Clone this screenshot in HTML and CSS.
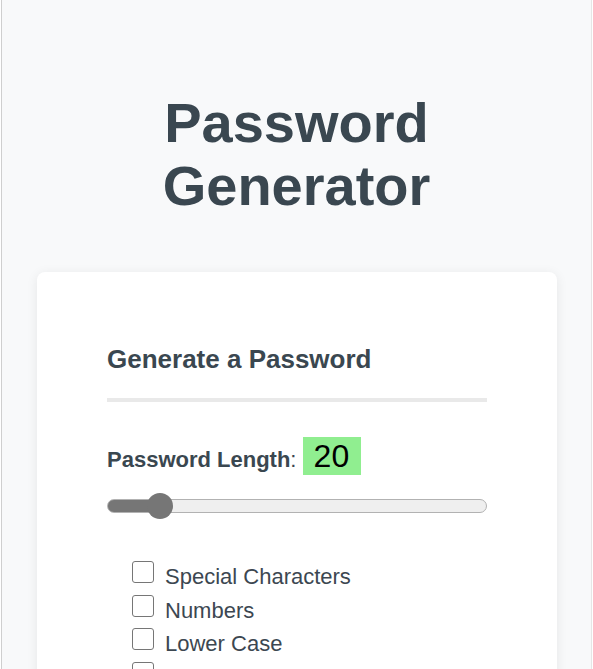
FILE: index.html
```html
<!DOCTYPE html>
<html lang="en">
<head>
<meta charset="utf-8">
<title>Password Generator</title>
<link rel="stylesheet" href="styles.css">
</head>
<body>
<div class="page">
  <h1 class="title">Password<br>Generator</h1>
  <section class="card">
    <div class="card-inner">
      <h2 class="card-title">Generate a Password</h2>
      <div class="divider"></div>
      <div class="length"><strong class="length-label">Password Length</strong>: <span class="length-value">20</span></div>
      <input class="slider" type="range" min="8" max="116" value="20" style="--fill: 14%">
      <ul class="options">
        <li class="option"><input class="check" type="checkbox" id="special"><label for="special">Special Characters</label></li>
        <li class="option"><input class="check" type="checkbox" id="numbers"><label for="numbers">Numbers</label></li>
        <li class="option"><input class="check" type="checkbox" id="lower"><label for="lower">Lower Case</label></li>
        <li class="option"><input class="check" type="checkbox" id="upper"><label for="upper">Upper Case</label></li>
      </ul>
    </div>
  </section>
</div>
</body>
</html>
```

FILE: styles.css
```css
html, body {
  margin: 0;
  padding: 0;
}

body {
  font-family: "Liberation Sans", Arial, sans-serif;
  background: #ffffff;
  color: #3a4750;
}

.page {
  margin: 0 1px;
  border-left: 1px solid #cfcfcf;
  border-right: 1px solid #e6e6e6;
  background: #f8f9fa;
  min-height: 100vh;
  padding-top: 91px;
  box-sizing: border-box;
  overflow: hidden;
}

.title {
  margin: 0;
  font-size: 56px;
  line-height: 63px;
  font-weight: 700;
  text-align: center;
  color: #3a4750;
}

.card {
  margin: 55px 34px 40px 35px;
  background: #ffffff;
  border-radius: 8px;
  box-shadow: 0 2px 12px rgba(0, 0, 0, 0.08);
  padding: 72px 0 40px;
}

.card-inner {
  width: 380px;
  margin: 0 auto;
}

.card-title {
  margin: 0;
  font-size: 26px;
  line-height: 30px;
  font-weight: 700;
  color: #3a4750;
}

.divider {
  height: 4px;
  background: #e9e9e9;
  margin-top: 24px;
}

.length {
  margin-top: 35px;
  line-height: 38px;
  font-size: 22px;
  color: #3a4750;
}

.length-label {
  font-weight: 700;
}

.length-value {
  font-size: 32px;
  background: #90ee90;
  color: #000000;
  padding: 1px 12px 1px 11px;
}

.slider {
  -webkit-appearance: none;
  appearance: none;
  display: block;
  width: 100%;
  height: 26px;
  margin: 14px 0 0;
  padding: 0;
  background: transparent;
}

.slider::-webkit-slider-runnable-track {
  box-sizing: border-box;
  height: 14px;
  border-radius: 7px;
  border: 1px solid #b2b2b2;
  background: linear-gradient(to right, #767676 var(--fill), #efefef var(--fill));
}

.slider::-webkit-slider-thumb {
  -webkit-appearance: none;
  appearance: none;
  width: 26px;
  height: 26px;
  border-radius: 50%;
  background: #767676;
  border: none;
  margin-top: -7px;
}

.options {
  list-style: none;
  margin: 41px 0 0;
  padding: 0 0 0 25px;
}

.option {
  display: flex;
  align-items: flex-start;
  font-size: 22px;
  line-height: 33.5px;
  color: #3c4751;
}

.check {
  -webkit-appearance: none;
  appearance: none;
  box-sizing: border-box;
  width: 22px;
  height: 22px;
  margin: 1px 11px 0 0;
  border: 1.5px solid #767676;
  border-radius: 3px;
  background: #ffffff;
  flex: none;
}
```
